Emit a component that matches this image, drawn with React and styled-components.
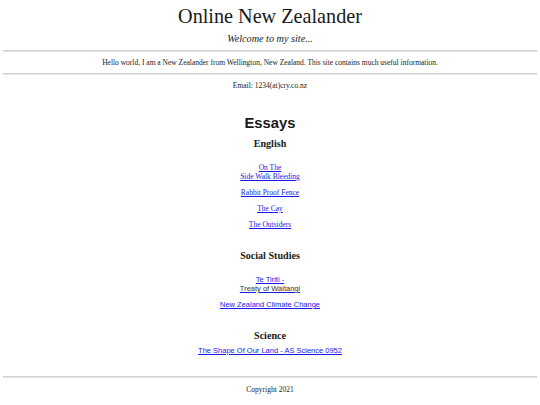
import React from 'react';
import styled, { createGlobalStyle } from 'styled-components';

const GlobalStyle = createGlobalStyle`
    body {
        margin: 0;
        background: #ffffff;
        color: #1a1a1a;
        font-family: "Liberation Serif", "Times New Roman", serif;
    }
`;

const Page = styled.div`
    width: 540px;
    padding: 0 3px;
    box-sizing: border-box;
    display: flex;
    flex-direction: column;
    align-items: stretch;
    text-align: center;
`;

const SiteTitle = styled.h1`
    margin: 3px 0 0;
    font-size: 20.2px;
    line-height: 26px;
    font-weight: normal;
`;

const Tagline = styled.p`
    margin: 3px 0 0;
    font-size: 10.2px;
    line-height: 14px;
    font-style: italic;
`;

const Rule = styled.hr`
    margin: ${(p) => p.$top}px 0 0;
    height: 0;
    border: none;
    border-top: 1px solid #cfcfcf;
    border-bottom: 1px solid #e6e6e6;
`;

const SmallText = styled.p`
    margin: ${(p) => p.$top}px 0 0;
    font-size: 7.5px;
    line-height: 10px;
`;

const SectionTitle = styled.h1`
    margin: 23px 0 0;
    font-family: "Liberation Sans", Arial, sans-serif;
    font-size: 14.8px;
    line-height: 18px;
    font-weight: bold;
`;

const SubjectTitle = styled.h2`
    margin: ${(p) => p.$top}px 0 0;
    font-size: 10.1px;
    line-height: 14px;
    font-weight: bold;
`;

const LinkList = styled.div`
    margin-top: ${(p) => p.$top}px;
    display: flex;
    flex-direction: column;
    align-items: center;
    gap: 7px;
`;

const EssayLink = styled.a`
    display: block;
    font-family: ${(p) => (p.$sans ? '"Liberation Sans", Arial, sans-serif' : '"Liberation Serif", "Times New Roman", serif')};
    font-size: 7.5px;
    line-height: 9px;
    color: #1a1ae6;
    text-decoration: underline;
`;

const PlainLine = styled.span`
    color: #333333;
`;

const Footer = styled.footer`
    display: flex;
    flex-direction: column;
    margin-top: 21px;
`;

const App = () => {
    return (
        <Page>
            <GlobalStyle />
            <SiteTitle>Online New Zealander</SiteTitle>
            <Tagline>Welcome to my site...</Tagline>
            <Rule $top={4} />
            <SmallText $top={6}>
                Hello world, I am a New Zealander from Wellington, New Zealand. This site contains much useful information.
            </SmallText>
            <Rule $top={5} />
            <SmallText $top={6}>Email: 1234(at)cry.co.nz</SmallText>

            <SectionTitle>Essays</SectionTitle>

            <SubjectTitle $top={5}>English</SubjectTitle>
            <LinkList $top={12}>
                <EssayLink href='#'>On The <br />Side Walk Bleeding</EssayLink>
                <EssayLink href='#'>Rabbit Proof Fence</EssayLink>
                <EssayLink href='#'>The Cay</EssayLink>
                <EssayLink href='#'>The Outsiders</EssayLink>
            </LinkList>

            <SubjectTitle $top={20}>Social Studies</SubjectTitle>
            <LinkList $top={12}>
                <EssayLink href='#' $sans>Te Tiriti - <br /><PlainLine>Treaty of Waitangi</PlainLine></EssayLink>
                <EssayLink href='#' $sans>New Zealand Climate Change</EssayLink>
            </LinkList>

            <SubjectTitle $top={20}>Science</SubjectTitle>
            <LinkList $top={3}>
                <EssayLink href='#' $sans>The Shape Of Our Land - AS Science 0952</EssayLink>
            </LinkList>

            <Footer>
                <Rule $top={0} />
                <SmallText $top={7}>Copyright 2021</SmallText>
            </Footer>
        </Page>
    );
};

export default App;
